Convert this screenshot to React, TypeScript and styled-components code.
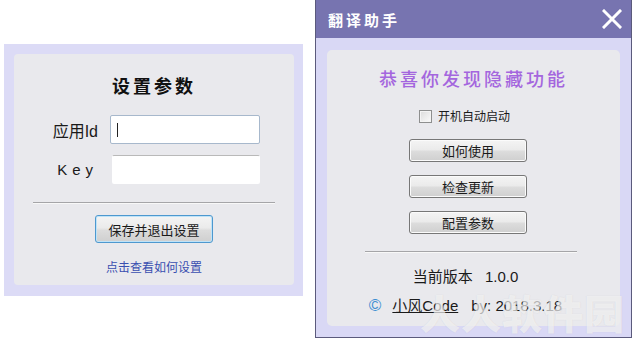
import styled, { createGlobalStyle } from "styled-components"

const GlobalStyle = createGlobalStyle`
  html, body {
    margin: 0;
    padding: 0;
    background: #ffffff;
  }
  body {
    font-family: "Liberation Sans", "Noto Sans CJK SC", sans-serif;
    color: #1a1a1a;
  }
`

const Page = styled.div`
  position: relative;
  width: 641px;
  height: 340px;
  overflow: hidden;
  display: flex;
  align-items: flex-start;
`

// ---- left: settings dialog ----

const SettingsFrame = styled.div`
  margin: 44px 0 0 4px;
  width: 299px;
  height: 252px;
  box-sizing: border-box;
  padding: 10px 9px 11px 10px;
  background: #dcdbf6;
`

const SettingsPanel = styled.div`
  height: 100%;
  background: #e9e9ed;
  border-radius: 4px;
  display: flex;
  flex-direction: column;
  align-items: center;
`

const BrushTitle = styled.div<{ color?: string }>`
  font-family: "Noto Sans CJK SC", serif;
  font-weight: 700;
  font-size: 18px;
  line-height: 24px;
  letter-spacing: 3px;
  color: ${(p) => p.color ?? "#111"};
`

const FormGrid = styled.div`
  margin-top: 18px;
  align-self: flex-start;
  margin-left: 24px;
  display: grid;
  grid-template-columns: 60px 150px;
  column-gap: 12px;
  row-gap: 11px;
  align-items: center;
`

const FieldLabel = styled.label<{ spaced?: boolean }>`
  text-align: right;
  font-size: ${(p) => (p.spaced ? "15px" : "16px")};
  letter-spacing: ${(p) => (p.spaced ? "5px" : "0")};
  font-family: "Liberation Sans", "Noto Sans CJK SC", sans-serif;
`

const TextBox = styled.div<{ focused?: boolean }>`
  height: 29px;
  box-sizing: border-box;
  background: #fff;
  border: 1px solid ${(p) => (p.focused ? "#a7b8cc" : "transparent")};
  border-top-color: ${(p) => (p.focused ? "#a7b8cc" : "#b9b9b9")};
  border-radius: 2px;
  margin-left: ${(p) => (p.focused ? "0" : "2px")};
  display: flex;
  align-items: center;
  padding-left: 6px;
`

const Caret = styled.span`
  width: 1px;
  height: 14px;
  background: #222;
`

const Rule = styled.div<{ w: number }>`
  width: ${(p) => p.w}px;
  height: 1px;
  background: #a5a5a8;
  box-shadow: 0 1px 0 #f8f8f8;
`

const PushButton = styled.button<{ focused?: boolean }>`
  width: 118px;
  height: ${(p) => (p.focused ? 28 : 23)}px;
  box-sizing: border-box;
  border: 1px solid ${(p) => (p.focused ? "#4d98cf" : "#777")};
  border-radius: 3px;
  background: linear-gradient(#f4f4f4 0%, #ebebeb 45%, #dcdcdc 55%, #cfcfcf 100%);
  box-shadow: inset 0 0 0 1px ${(p) => (p.focused ? "#bfe3f8" : "#fbfbfb")};
  font-family: "Noto Sans CJK SC", sans-serif;
  font-size: 13px;
  color: #1a1a1a;
  padding: 0;
  line-height: 1;
`

const HelpLink = styled.a`
  margin-top: 15px;
  font-family: "Noto Sans CJK SC", sans-serif;
  font-size: 12px;
  color: #3a4fb0;
  text-decoration: none;
`

// ---- right: helper window ----

const HelperWindow = styled.div`
  margin-left: 12px;
  width: 317px;
  height: 338px;
  box-sizing: border-box;
  border: 1px solid #5b5a7c;
  border-top: none;
  display: flex;
  flex-direction: column;
  background: #d9d8f5;
`

const TitleBar = styled.div`
  height: 38px;
  flex: none;
  background: #7774b0;
  display: flex;
  align-items: center;
  justify-content: space-between;
  padding: 0 9px 0 12px;
`

const TitleText = styled.span`
  font-family: "Noto Sans CJK SC", serif;
  font-weight: 700;
  font-size: 15px;
  letter-spacing: 3px;
  color: #fff;
`

const WindowBody = styled.div`
  flex: 1;
  padding: 12px 11px 11px 11px;
  display: flex;
`

const HelperPanel = styled.div`
  flex: 1;
  background: #e9e9ed;
  border-radius: 5px;
  display: flex;
  flex-direction: column;
  align-items: center;
`

const CheckRow = styled.label`
  margin-top: 18px;
  display: flex;
  align-items: center;
  gap: 6px;
  font-family: "Noto Sans CJK SC", sans-serif;
  font-size: 12px;
  line-height: 16px;
  margin-right: 18px;
`

const CheckBox = styled.span`
  width: 11px;
  height: 11px;
  border: 1px solid #8e8f8f;
  background: linear-gradient(135deg, #dcdcdc, #fbfbfb);
  box-shadow: inset 0 0 0 1px #f4f4f4;
`

const ButtonStack = styled.div`
  margin-top: 15px;
  display: flex;
  flex-direction: column;
  gap: 13px;
  margin-right: 11px;
`

const VersionLine = styled.div`
  margin-top: 15px;
  font-family: "Liberation Sans", "Noto Sans CJK SC", sans-serif;
  font-size: 15px;
  line-height: 20px;
  margin-right: 16px;
  word-spacing: 8px;
`

const CreditLine = styled.div`
  margin-top: 9px;
  display: flex;
  align-items: center;
  font-family: "Liberation Sans", "Noto Sans CJK SC", sans-serif;
  font-size: 15px;
  line-height: 20px;
  margin-right: 16px;
`

const Copy = styled.span`
  color: #3c8fd2;
  font-size: 17px;
  margin-right: 11px;
`

const Author = styled.span`
  text-decoration: underline;
  margin-right: 13px;
`

const Watermark = styled.div`
  position: absolute;
  left: 420px;
  top: 290px;
  font-family: "Noto Sans CJK SC", sans-serif;
  font-weight: 900;
  font-size: 40px;
  line-height: 44px;
  letter-spacing: 1px;
  color: rgba(255, 255, 255, 0.6);
  text-shadow: 0 0 1px rgba(160, 160, 160, 0.3);
  pointer-events: none;
  white-space: nowrap;
`

const CloseIcon = () => (
  <svg width="20" height="20" viewBox="0 0 20 20">
    <path d="M2 2 L18 18 M18 2 L2 18" stroke="#fff" strokeWidth="3" strokeLinecap="square" />
  </svg>
)

export default function App() {
  return (
    <Page>
      <GlobalStyle />
      <SettingsFrame>
        <SettingsPanel>
          <BrushTitle style={{ marginTop: 19 }}>设置参数</BrushTitle>
          <FormGrid>
            <FieldLabel>应用Id</FieldLabel>
            <TextBox focused>
              <Caret />
            </TextBox>
            <FieldLabel spaced>Key</FieldLabel>
            <TextBox />
          </FormGrid>
          <div style={{ marginTop: 18 }}>
            <Rule w={242} />
          </div>
          <div style={{ marginTop: 12 }}>
            <PushButton focused>保存并退出设置</PushButton>
          </div>
          <HelpLink href="#">点击查看如何设置</HelpLink>
        </SettingsPanel>
      </SettingsFrame>

      <HelperWindow>
        <TitleBar>
          <TitleText>翻译助手</TitleText>
          <CloseIcon />
        </TitleBar>
        <WindowBody>
          <HelperPanel>
            <BrushTitle color="#a466de" style={{ marginTop: 16, fontWeight: 500 }}>
              恭喜你发现隐藏功能
            </BrushTitle>
            <CheckRow>
              <CheckBox />
              开机自动启动
            </CheckRow>
            <ButtonStack>
              <PushButton>如何使用</PushButton>
              <PushButton>检查更新</PushButton>
              <PushButton>配置参数</PushButton>
            </ButtonStack>
            <div style={{ marginTop: 17, marginRight: 5 }}>
              <Rule w={212} />
            </div>
            <VersionLine>当前版本 1.0.0</VersionLine>
            <CreditLine>
              <Copy>©</Copy>
              <Author>小风Code</Author>
              by: 2018.3.18
            </CreditLine>
          </HelperPanel>
        </WindowBody>
      </HelperWindow>
      <Watermark>人人软件园</Watermark>
    </Page>
  )
}
